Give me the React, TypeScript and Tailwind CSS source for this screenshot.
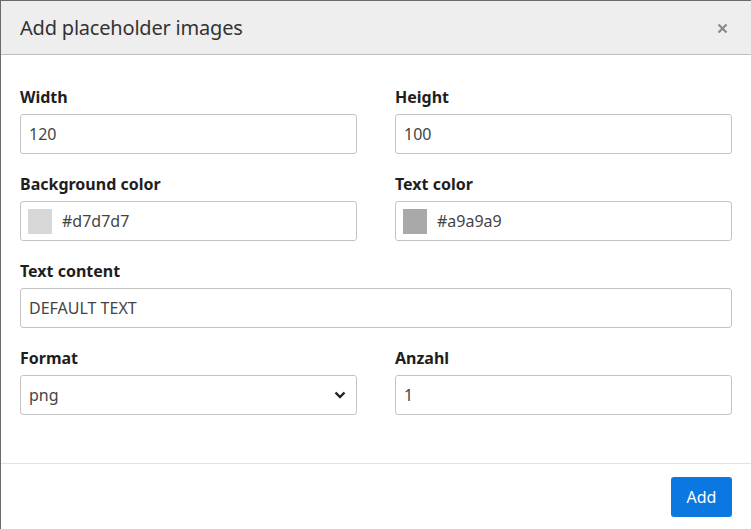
import React from "react";

function Label({ children }: { children: React.ReactNode }) {
  return (
    <div className="text-[16px] leading-[20px] font-bold text-[#1e1e1e] mb-[7px]">{children}</div>
  );
}

function Box({ children }: { children: React.ReactNode }) {
  return (
    <div className="h-[40px] border border-[#c4c4c4] rounded-[3px] bg-white flex items-center px-[8px] text-[16px] text-[#444]">
      {children}
    </div>
  );
}

function Swatch({ color }: { color: string }) {
  return <div className="w-[24px] h-[25px] mr-[10px] -ml-[1px]" style={{ backgroundColor: color }} />;
}

export default function App() {
  return (
    <div
      className="w-[751px] h-[529px] bg-white border-l border-t border-[#6b6b6b] flex flex-col overflow-hidden"
      style={{ fontFamily: '"Noto Sans", "Open Sans", sans-serif' }}
    >
      <div className="h-[54px] bg-[#eeeeee] border-b border-[#bdbdbd] flex items-center justify-between pl-[19px] pr-[23px] shrink-0">
        <div className="text-[20px] text-[#333] tracking-[-0.2px]">Add placeholder images</div>
        <svg width="11" height="11" viewBox="0 0 11 11" className="mt-[1px]">
          <path d="M1.5 1.5 L9.5 9.5 M9.5 1.5 L1.5 9.5" stroke="#8a8a8a" strokeWidth="2.2" />
        </svg>
      </div>
      <div className="flex-1 px-[19px] pt-[32px]">
        <div className="grid grid-cols-2 gap-x-[38px] gap-y-[20px]">
          <div>
            <Label>Width</Label>
            <Box>120</Box>
          </div>
          <div>
            <Label>Height</Label>
            <Box>100</Box>
          </div>
          <div>
            <Label>Background color</Label>
            <Box>
              <Swatch color="#d7d7d7" />
              #d7d7d7
            </Box>
          </div>
          <div>
            <Label>Text color</Label>
            <Box>
              <Swatch color="#a9a9a9" />
              #a9a9a9
            </Box>
          </div>
          <div className="col-span-2">
            <Label>Text content</Label>
            <Box>DEFAULT TEXT</Box>
          </div>
          <div>
            <Label>Format</Label>
            <Box>
              <span className="flex-1">png</span>
              <svg width="12" height="8" viewBox="0 0 12 8" className="mr-[2px]">
                <path d="M1.5 1.5 L6 6 L10.5 1.5" stroke="#222" strokeWidth="2.4" fill="none" />
              </svg>
            </Box>
          </div>
          <div>
            <Label>Anzahl</Label>
            <Box>1</Box>
          </div>
        </div>
      </div>
      <div className="h-[66px] border-t border-[#e3e3e3] flex items-start justify-end pr-[19px] pt-[13px] shrink-0">
        <button className="w-[61px] h-[40px] rounded-[3px] bg-[#0a78e0] text-white text-[16px]">Add</button>
      </div>
    </div>
  );
}
